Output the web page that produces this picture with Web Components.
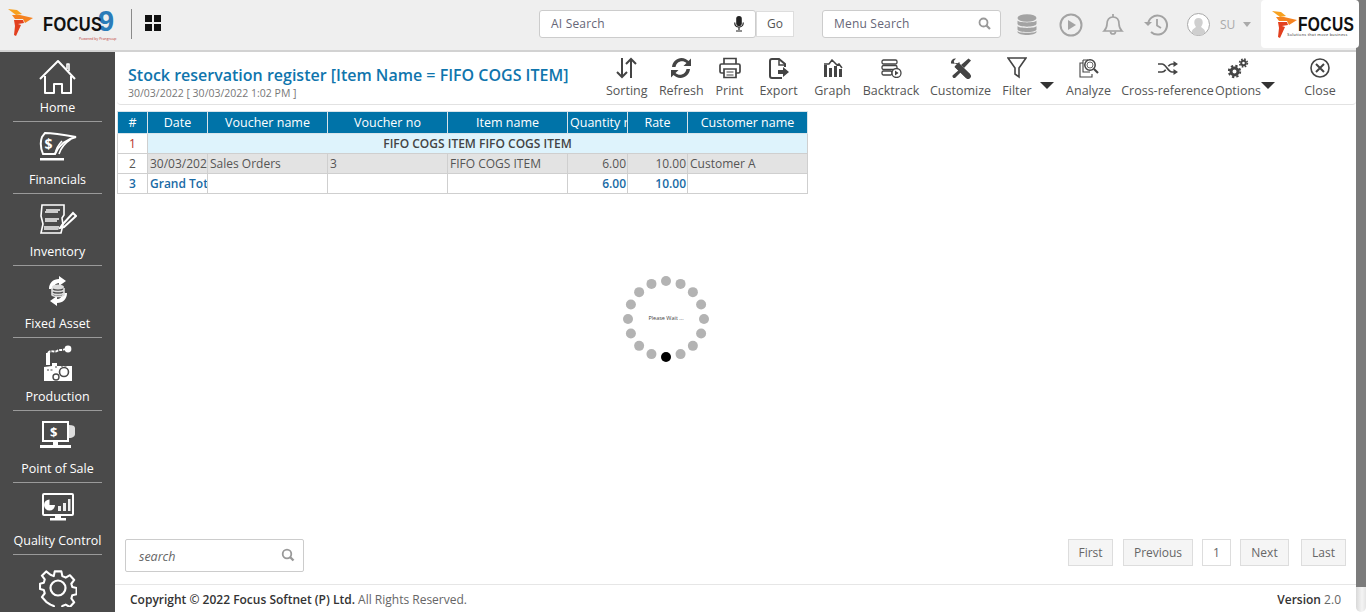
<!DOCTYPE html>
<html>
<head>
<meta charset="utf-8">
<title>Stock reservation register</title>
<style>
html, body { margin: 0; height: 100%; overflow: hidden; background: #fff; }
body { font: 13px "Open Sans", "Liberation Sans", sans-serif; color: #555; }
</style>
</head>
<body>
<f9-app>
  <f9-header slot="header"></f9-header>
  <f9-sidebar slot="sidebar">
    <f9-nav-item icon="home">Home</f9-nav-item>
    <f9-nav-item icon="financials">Financials</f9-nav-item>
    <f9-nav-item icon="inventory">Inventory</f9-nav-item>
    <f9-nav-item icon="asset">Fixed Asset</f9-nav-item>
    <f9-nav-item icon="production">Production</f9-nav-item>
    <f9-nav-item icon="pos">Point of Sale</f9-nav-item>
    <f9-nav-item icon="quality">Quality Control</f9-nav-item>
    <f9-nav-item icon="settings">Settings</f9-nav-item>
  </f9-sidebar>
  <f9-report slot="main">
    <f9-toolbar slot="toolbar">
      <f9-tool icon="sorting" style="--w:53.5px">Sorting</f9-tool>
      <f9-tool icon="refresh" style="--w:55.5px">Refresh</f9-tool>
      <f9-tool icon="print" style="--w:41px">Print</f9-tool>
      <f9-tool icon="export" style="--w:57px">Export</f9-tool>
      <f9-tool icon="graph" style="--w:51px">Graph</f9-tool>
      <f9-tool icon="backtrack" style="--w:66px">Backtrack</f9-tool>
      <f9-tool icon="customize" style="--w:73px">Customize</f9-tool>
      <f9-tool icon="filter" caret style="--w:63px">Filter</f9-tool>
      <f9-tool icon="analyze" style="--w:57px">Analyze</f9-tool>
      <f9-tool icon="cross" style="--w:101px">Cross-reference</f9-tool>
      <f9-tool icon="options" caret style="--w:76px">Options</f9-tool>
      <f9-tool icon="close" style="--w:52px">Close</f9-tool>
    </f9-toolbar>
    <f9-table slot="table"></f9-table>
    <f9-spinner slot="overlay"></f9-spinner>
    <f9-search slot="search"></f9-search>
    <f9-pager slot="pager"></f9-pager>
    <f9-footer slot="footer"></f9-footer>
  </f9-report>
  <f9-scrollbar slot="scroll"></f9-scrollbar>
</f9-app>

<script>
var W = 'fill="none" stroke="#fff" stroke-width="2" stroke-linejoin="round"';
var D = 'fill="none" stroke="#444" stroke-width="2"';

// sidebar icons, white on dark
var navIcons = {
  home: `<svg width="38" height="38" viewBox="0 0 38 38" ${W} stroke-linejoin="miter"><path d="M1 20 19 2l17 18"/><path d="M28 10V5h2v7" stroke-width="1.6"/><path d="M6 17v17h9v-9h8v9h9V17"/></svg>`,
  financials: `<svg width="38" height="30" viewBox="0 0 38 30"><path d="M3 5c-2 5-1 12 1 17h12c3-7 8-14 21-17C26 3 13 1 6 1z" fill="none" stroke="#fff" stroke-width="2"/><path d="M20 22c2-7 6-11 12-15M16 22c1-5 3-9 7-13" fill="none" stroke="#fff" stroke-width="1.6"/><text x="5.5" y="17" font-family="Open Sans" font-weight="700" font-size="14" fill="#fff">$</text><rect x="1" y="26" width="24" height="2.5" fill="#fff"/></svg>`,
  inventory: `<svg width="38" height="32" viewBox="0 0 38 32" fill="none" stroke="#fff" stroke-width="1.6"><path d="M3 2h22v10l-2 3 1 7-2 8H2l2-9-2-8z"/><path d="M7 7h14M6 9h13M6 16h14M6 18h12M5 24h15M5 26h14" stroke-width="2" stroke="#ccc"/><path d="M23 22 34 10l3 3-12 11-4 1z" stroke-width="2"/></svg>`,
  asset: `<svg width="26" height="30" viewBox="0 0 26 30" fill="none"><path d="M4 13C4 7 8 3 14 3V0l7 5-7 5V7c-3 0-5 2-6 6z" fill="#fff"/><path d="M22 17c0 6-4 10-10 10v3l-7-5 7-5v3c3 0 5-2 6-6z" fill="#fff"/><ellipse cx="13" cy="11" rx="6" ry="2.4" fill="#ddd"/><path d="M7 14c2 2 10 2 12 0M7 17c2 2 10 2 12 0M7 12v7c2 2 10 2 12 0v-7" stroke="#ddd" stroke-width="1.6"/></svg>`,
  production: `<svg width="30" height="37" viewBox="0 0 30 37"><path d="M5 20V8" stroke="#fff" stroke-width="4"/><path d="M5 8c3-4 6 0 9-2s5 0 8-2" stroke="#fff" stroke-width="2" fill="none" stroke-dasharray="3 1"/><circle cx="25" cy="4" r="3.4" fill="#fff"/><path d="M1 36V22l8-1V18h5v3h15v15z" fill="#fff"/><circle cx="21" cy="27" r="4.5" fill="none" stroke="#4a4a4a" stroke-width="1.6"/><circle cx="13" cy="32" r="3" fill="none" stroke="#4a4a4a" stroke-width="1.4"/><path d="M4 25h6M12 22h2M18 21h7" stroke="#4a4a4a" stroke-dasharray="2 1.5"/></svg>`,
  pos: `<svg width="37" height="28" viewBox="0 0 37 28"><rect x="4" y="1" width="25" height="19" fill="none" stroke="#fff" stroke-width="2"/><text x="11" y="16" font-family="Open Sans" font-weight="700" font-size="13" fill="#fff">$</text><path d="M30 4c4 0 6 1 6 3v6c0 2-2 4-6 4z" fill="#ddd"/><rect x="14" y="20" width="5" height="4" fill="#fff"/><rect x="1" y="24" width="31" height="3" fill="#fff"/></svg>`,
  quality: `<svg width="34" height="29" viewBox="0 0 34 29"><rect x="2" y="1" width="30" height="21" rx="1" fill="none" stroke="#fff" stroke-width="2"/><path d="M13 11A5.5 5.5 0 1 1 7.500 5.500V11z" fill="#fff" transform="translate(1 1)"/><path d="M17 18v-5h3v5zM22 18v-8h3v8zM27 18V6h2.500v12z" fill="#eee"/><rect x="14" y="22" width="6" height="3" fill="#fff"/><rect x="9" y="25" width="16" height="2.500" fill="#fff"/></svg>`,
  settings: `<svg width="38" height="38" viewBox="0 0 38 38" fill="none" stroke="#fff" stroke-width="2.200" stroke-linejoin="round"><path d="M15.500 2h7l1 5 3.500 1.500 4.500-2.500 4.500 5-3 4 1 3.500 4.500 1v6.500l-4.500 1-1 3.500 3 4-4.500 5-4.500-2.500-3.500 1.500-1 4h-7l-1-4-3.500-1.500L6.500 34 2 29l3-4-1-3.500-4-1V15l4-1 1-3.500-3-4L6.500 2 11 5.500 14.500 7z" transform="translate(1 .5) scale(.95)"/><circle cx="19" cy="19" r="7.500"/></svg>`
};

// toolbar icons
var toolIcons = {
  sorting: `<svg width="21" height="22" viewBox="0 0 21 22" ${D}><path d="M6 1v19M1 15l5 5 5-5"/><path d="M15 21V2M10 7l5-5 5 5"/></svg>`,
  refresh: `<svg width="22" height="22" viewBox="0 0 22 22" fill="#444"><path d="M2 10C2.500 4.500 7 1 11.500 1c3 0 5.500 1.500 7 3L21 1.500V9h-7.500L16.500 6c-4-3.500-10-1.500-11 4z"/><path d="M20 12c-.5 5.500-5 9-9.500 9-3 0-5.500-1.500-7-3L1 20.500V13h7.500L5.500 16c4 3.500 10 1.500 11-4z"/></svg>`,
  print: `<svg width="22" height="22" viewBox="0 0 22 22" fill="none" stroke="#444" stroke-width="1.700"><path d="M5 7V1.500h12V7"/><path d="M5 16H2.500A1.500 1.500 0 0 1 1 14.500v-6A1.500 1.500 0 0 1 2.500 7h17A1.500 1.500 0 0 1 21 8.500v6a1.500 1.500 0 0 1-1.500 1.500H17"/><path d="M5 12h12v8.500H5z"/><path d="M7.500 15h7M7.500 18h7" stroke-width="1"/></svg>`,
  export: `<svg width="20" height="21" viewBox="0 0 20 21"><path d="M13 20H3a2 2 0 0 1-2-2V3a2 2 0 0 1 2-2h7l6 5v3" fill="none" stroke="#444" stroke-width="2"/><path d="M10 1v6h6" fill="none" stroke="#444" stroke-width="1.500"/><path d="M9 12h5V9l6 5-6 5v-3H9z" fill="#444"/></svg>`,
  graph: `<svg width="20" height="18" viewBox="0 0 20 18" fill="#444"><path d="M1 6h3v12H1zM6 9h3v9H6zM11 7h3v11h-3zM16 10h3v8h-3z"/><path d="M1 5l5 0 3-4 5 5 2-1 3 4" fill="none" stroke="#444" stroke-width="1.500"/></svg>`,
  backtrack: `<svg width="21" height="19" viewBox="0 0 21 19" fill="none" stroke="#444" stroke-width="1.300"><rect x="1" y="1" width="15" height="4" rx="1.500"/><rect x="1" y="6.500" width="15" height="4" rx="1.500"/><rect x="1" y="12" width="10" height="4" rx="1.500"/><circle cx="15.500" cy="14" r="4.500" fill="#fff"/><path d="M14 11.500 17.500 14 14 16.500z" fill="#444" stroke="none"/></svg>`,
  customize: `<svg width="22" height="21" viewBox="0 0 22 21" fill="#444"><path d="M2 1 0.500 2.500 7 10l-5.500 6a2.800 2.800 0 0 0 3.500 3.500L10.500 14l5 5.500a2.500 2.500 0 0 0 4-4L14 10 6 3z" opacity="0"/><path d="M1 5.500C.5 2.500 3 0 6 .5L3.800 3l.7 2.500 2.500.7L9.500 4c.5 3-2 5.500-5 5 0 0 0 0 0 0l11.500 11a2.500 2.500 0 0 0 4.200-3.700L8 5"/><path d="M4.500 8.500 16 20l4-4L8.500 4.500z"/><path d="M21 2.500 18.500.5 11 7l3 3z"/><path d="M10 11 2.500 17.500a2 2 0 0 0 2.500 2.500L12 13z"/></svg>`,
  filter: `<svg width="20" height="22" viewBox="0 0 20 22" fill="none" stroke="#444" stroke-width="1.600"><path d="M1 1h18l-7 10v9l-4-3v-6z"/></svg>`,
  analyze: `<svg width="20" height="20" viewBox="0 0 20 20" fill="none" stroke="#444" stroke-width="1.100"><path d="M4 5H1v14h12v-3"/><path d="M4 2h5M4 2v12h7"/><circle cx="11" cy="7" r="5.200" stroke-width="1.500"/><circle cx="11" cy="7" r="3" stroke-width=".8"/><path d="M15 11l4 4" stroke-width="2.200"/></svg>`,
  cross: `<svg width="20" height="14" viewBox="0 0 20 14" fill="none" stroke="#444" stroke-width="1.700"><path d="M0 3h4c4 0 6 8 10 8h2M0 11h4c1.500 0 2.700-1 3.700-2.300M10.300 5.300C11.300 4 12.500 3 14 3h2"/><path d="M15.500 0 20 3l-4.500 3zM15.500 8 20 11l-4.500 3z" fill="#444" stroke="none"/></svg>`,
  options: `<svg width="21" height="21" viewBox="0 0 21 21"><g fill="none" stroke="#444"><circle cx="6.500" cy="13.500" r="3.500" stroke-width="3"/><circle cx="6.500" cy="13.500" r="5.700" stroke-width="2" stroke-dasharray="2.300 2.200"/><circle cx="15.500" cy="5" r="2.300" stroke-width="2"/><circle cx="15.500" cy="5" r="3.900" stroke-width="1.600" stroke-dasharray="1.600 1.500"/></g></svg>`,
  close: `<svg width="20" height="20" viewBox="0 0 20 20" fill="none" stroke="#444" stroke-width="1.600"><circle cx="10" cy="10" r="9"/><path d="M6 6l8 8M14 6l-8 8" stroke-width="2"/></svg>`
};

var flame = `<svg width="25" height="28" viewBox="0 0 25 28"><path d="M0 0l9 1 5 4-6 1z" fill="#f7a11f"/><path d="M4 6l8 0 13 3-8 5-2-4-8 0z" fill="#f58220"/><path d="M6 11l9 0 1 3-6 1 3 1-5 11-2-1 1-9z" fill="#e2401f"/></svg>`;

class F9App extends HTMLElement {
  constructor() {
    super();
    this.attachShadow({ mode: 'open' }).innerHTML = `<style>
      :host { display: grid; width: 1366px; height: 612px; overflow: hidden;
        grid-template-columns: 115px 1fr 10px; grid-template-rows: 52px 1fr; }
      ::slotted([slot=header]) { grid-column: 1 / 3; }
      ::slotted([slot=scroll]) { grid-column: 3; grid-row: 1 / 3; }
    </style><slot name="header"></slot><slot name="scroll"></slot><slot name="sidebar"></slot><slot name="main"></slot>`;
  }
}

class F9Header extends HTMLElement {
  constructor() {
    super();
    this.attachShadow({ mode: 'open' }).innerHTML = `<style>
      :host { display: flex; align-items: center; background: #efefef; border-bottom: 2px solid #d2d2d2; box-sizing: border-box; height: 52px; position: relative; }
      .brand { display: flex; align-items: center; width: 131px; height: 100%; box-sizing: border-box; padding: 0 0 4px 8px; border-right: 0; flex: none; }
      .word { font: 700 21px/1 "Liberation Sans", sans-serif; color: #111; display: inline-block; transform: scaleX(.78); transform-origin: left center; margin-left: 10px; width: 54px; letter-spacing: .5px; }
      .nine { font: 700 29px/1 "Liberation Sans", sans-serif; color: #2b7cb9; margin-left: 1px; margin-top: -4px; }
      .pow { position: absolute; left: 79px; top: 37px; font: 3.500px/1 "Open Sans", sans-serif; color: #b33; white-space: nowrap; }
      .sep { width: 1px; height: 30px; background: #8a8a8a; flex: none; margin-bottom: 2px; }
      .tiles { display: grid; grid-template: 7px 7px / 7px 7px; gap: 2px; margin: 0 0 4px 13px; flex: none; }
      .tiles i { background: #111; }
      .box { display: flex; align-items: center; height: 28px; box-sizing: border-box; background: #fff; border: 1px solid #ccc; border-radius: 3px; font-size: 12px; color: #667; padding: 0 11px; flex: none; margin-bottom: 3px; }
      .box span { flex: 1; letter-spacing: .2px; }
      .ai { width: 217px; margin-left: 378px; }
      .go { width: 38px; height: 26px; background: #fff; border: 1px solid #ddd; display: flex; align-items: center; justify-content: center; font-size: 12px; color: #555; box-sizing: border-box; margin-bottom: 3px; flex: none; }
      .menu { width: 179px; margin-left: 28px; padding-right: 9px; }
      .icons { display: flex; align-items: center; flex: none; margin-bottom: 1px; }
      .icons svg { display: block; flex: none; }
      .su { font-size: 12px; color: #aaa; margin-left: 10px; }
      .caret { width: 0; height: 0; border: 4px solid transparent; border-top: 5px solid #aaa; border-bottom: 0; margin-left: 8px; }
      .logo { flex: none; width: 98px; height: 48px; background: #fff; border-radius: 4px; margin-left: 10px; margin-bottom: 2px; position: relative; display: flex; align-items: flex-start; padding: 11px 0 0 11px; box-sizing: border-box; }
      .logo .word { font-size: 21px; width: 46px; margin: 2px 0 0 1px; transform: scaleX(.74); }
      .tag { position: absolute; left: 26px; top: 33px; font: 3.800px/1 "Open Sans", sans-serif; color: #222; white-space: nowrap; letter-spacing: .3px; }
    </style>
    <div class="brand">${flame}<span class="word">FOCUS</span><span class="nine">9</span><span class="pow">Powered by Prangroup</span></div>
    <div class="sep"></div>
    <div class="tiles"><i></i><i></i><i></i><i></i></div>
    <div class="box ai"><span>AI Search</span>
      <svg width="10" height="16" viewBox="0 0 10 16"><rect x="2.200" y="0" width="5.600" height="10" rx="2.800" fill="#222"/><path d="M.7 6.500c0 6 8.600 6 8.600 0M5 11v3M2 15h6" fill="none" stroke="#222" stroke-width="1.200"/></svg>
    </div>
    <div class="go">Go</div>
    <div class="box menu"><span>Menu Search</span>
      <svg width="13" height="13" viewBox="0 0 13 13" fill="none" stroke="#999" stroke-width="1.800"><circle cx="5.500" cy="5.500" r="4"/><path d="M8.500 8.500l3.500 3.500" stroke-width="2.200"/></svg>
    </div>
    <div class="icons">
      <svg style="margin-left:16px" width="20" height="22" viewBox="0 0 20 22"><ellipse cx="10" cy="4" rx="9.500" ry="3.800" fill="#a3a3a3"/><path d="M.5 6.500c1 2.500 18 2.500 19 0V10c-1 3.500-18 3.500-19 0zM.5 12c1 2.500 18 2.500 19 0v3.500c-1 3.500-18 3.500-19 0zM.5 17c1 2.500 18 2.500 19 0v1c-1 4-18 4-19 0z" fill="#a3a3a3"/></svg>
      <svg style="margin-left:22px" width="24" height="24" viewBox="0 0 24 24"><circle cx="12" cy="12" r="10.500" fill="none" stroke="#a3a3a3" stroke-width="2"/><path d="M9 7l8 5-8 5z" fill="#a3a3a3"/></svg>
      <svg style="margin-left:19px" width="22" height="23" viewBox="0 0 22 23" fill="none" stroke="#a3a3a3" stroke-width="1.700"><path d="M2 18c2-2 3-3 3-7 0-4 2-7 6-7s6 3 6 7c0 4 1 5 3 7z"/><path d="M11 1v3M8.500 18.500a2.500 2.500 0 0 0 5 0"/></svg>
      <svg style="margin-left:20px" width="24" height="22" viewBox="0 0 24 22" fill="none" stroke="#a3a3a3" stroke-width="2"><path d="M4 11a9.500 9.500 0 1 1 3 7"/><path d="M0 8l4 4 4-4" fill="#a3a3a3" stroke="none"/><path d="M13 5v6.500l4 2.500" stroke-width="1.800"/></svg>
      <svg style="margin-left:19px" width="23" height="23" viewBox="0 0 23 23"><circle cx="11.500" cy="11.500" r="11" fill="#fff" stroke="#a8a8a8"/><path d="M4.500 19.500c1-4 3.500-4.500 4.500-5.500-3-4-2-9 2.500-9s5.500 5 2.500 9c1 1 3.500 1.500 4.500 5.500a10 10 0 0 1-14 0z" fill="#cfcfcf"/></svg>
      <span class="su">SU</span><i class="caret"></i>
    </div>
    <div class="logo">${flame}<span class="word">FOCUS</span><span class="tag">Solutions that move business</span></div>`;
  }
}

class F9Sidebar extends HTMLElement {
  constructor() {
    super();
    this.attachShadow({ mode: 'open' }).innerHTML = `<style>
      :host { display: block; background: #4a4a4a; overflow: hidden; min-height: 0; }
    </style><slot></slot>`;
  }
}

class F9NavItem extends HTMLElement {
  constructor() { super(); this.attachShadow({ mode: 'open' }); }
  connectedCallback() {
    this.shadowRoot.innerHTML = `<style>
      :host { display: flex; flex-direction: column; align-items: center; height: 72.170px; margin: 0 13px; box-sizing: border-box; color: #fff; font-size: 12.500px; position: relative; }
      :host(:first-child) { height: 70px; }
      :host(:not(:last-child)) { border-bottom: 1px solid #9a9a9a; }
      :host(:last-child) { height: 80px; }
      .ic { flex: 1; min-height: 0; display: flex; align-items: center; justify-content: center; }
      :host(:first-child) .ic { padding-top: 4px; }
      :host(:last-child) .ic { padding-top: 8px; }
      .lb { line-height: 18px; height: 18px; margin-bottom: 4px; white-space: nowrap; }
      svg { display: block; }
    </style><div class="ic">${navIcons[this.getAttribute('icon')]}</div><div class="lb"><slot></slot></div>`;
  }
}

class F9Report extends HTMLElement {
  constructor() {
    super();
    this.attachShadow({ mode: 'open' }).innerHTML = `<style>
      :host { display: flex; flex-direction: column; min-width: 0; min-height: 0; position: relative; background: #fff; }
      .body { flex: 1; min-height: 0; padding: 6px 0 0 2px; }
      .bottom { display: flex; justify-content: space-between; align-items: flex-start; padding: 0 10px 12px 10px; }
    </style><slot name="toolbar"></slot><div class="body"><slot name="table"></slot></div><slot name="overlay"></slot>
    <div class="bottom"><slot name="search"></slot><slot name="pager"></slot></div><slot name="footer"></slot>`;
  }
}

class F9Toolbar extends HTMLElement {
  constructor() {
    super();
    this.attachShadow({ mode: 'open' }).innerHTML = `<style>
      :host { display: flex; align-items: flex-start; height: 53px; box-sizing: border-box; margin-left: 2px; padding-right: 10px; border-bottom: 1px solid #e2e2e2; border-radius: 0 0 4px 4px; }
      .title { flex: 1; min-width: 0; padding: 12px 0 0 11px; }
      h1 { margin: 0; font: 600 16px/22px "Open Sans", sans-serif; color: #0f75ad; white-space: nowrap; }
      .date { font-size: 10.500px; line-height: 15px; color: #777; white-space: nowrap; margin-top: 0; }
      .tools { display: flex; flex: none; }
    </style>
    <div class="title"><h1>Stock reservation register [Item Name = FIFO COGS ITEM]</h1><div class="date">30/03/2022 [ 30/03/2022 1:02 PM ]</div></div>
    <div class="tools"><slot></slot></div>`;
  }
}

class F9Tool extends HTMLElement {
  constructor() { super(); this.attachShadow({ mode: 'open' }); }
  connectedCallback() {
    var caret = this.hasAttribute('caret');
    this.shadowRoot.innerHTML = `<style>
      :host { display: flex; width: var(--w); flex: none; color: #555; font-size: 12.500px; }
      .in { display: flex; flex-direction: column; align-items: center; width: ${caret ? '40px' : '100%'}; flex: none; }
      .ic { height: 24px; margin-top: 4px; display: flex; align-items: center; justify-content: center; }
      .lb { line-height: 17px; margin-top: 2px; white-space: nowrap; }
      .caret { width: 0; height: 0; border: 7px solid transparent; border-top: 7px solid #333; border-bottom: 0; margin: 30px 0 0 3px; }
      svg { display: block; }
    </style><div class="in"><div class="ic">${toolIcons[this.getAttribute('icon')]}</div><div class="lb"><slot></slot></div></div>${caret ? '<i class="caret"></i>' : ''}`;
  }
}

class F9Table extends HTMLElement {
  constructor() {
    super();
    var cols = [30, 60, 120, 120, 120, 60, 60, 120];
    var heads = ['#', 'Date', 'Voucher name', 'Voucher no', 'Item name', 'Quantity reserved', 'Rate', 'Customer name'];
    this.attachShadow({ mode: 'open' }).innerHTML = `<style>
      :host { display: block; width: 691px; }
      table { border-collapse: collapse; table-layout: fixed; width: 691px; font-size: 12px; color: #555; }
      th { background: #0073a8; color: #fff; font-weight: 400; height: 21px; padding: 0 2px; border: 1px solid #d8e4ea; white-space: nowrap; overflow: hidden; text-overflow: clip; font-size: 12.500px; }
      td { height: 19px; padding: 0 2px; border: 1px solid #cfcfcf; white-space: nowrap; overflow: hidden; }
      .n { text-align: center; }
      .r { text-align: right; padding-right: 1px; }
      .group td.g { background: #def3fc; text-align: center; font-weight: 600; color: #444; }
      .red { color: #b5322a; }
      .grey td:not(.n) { background: #e3e3e3; }
      .total td { color: #1a6aa5; font-weight: 600; }
      .total td.n { font-weight: 600; }
    </style>
    <table>
      <colgroup>${cols.map(c => `<col style="width:${c}px">`).join('')}</colgroup>
      <tr>${heads.map(h => `<th>${h}</th>`).join('')}</tr>
      <tr class="group"><td class="n red">1</td><td class="g" colspan="7">FIFO COGS ITEM FIFO COGS ITEM</td></tr>
      <tr class="grey"><td class="n">2</td><td>30/03/2022</td><td>Sales Orders</td><td>3</td><td>FIFO COGS ITEM</td><td class="r">6.00</td><td class="r">10.00</td><td>Customer A</td></tr>
      <tr class="total"><td class="n">3</td><td>Grand Total</td><td></td><td></td><td></td><td class="r">6.00</td><td class="r">10.00</td><td></td></tr>
    </table>`;
  }
}

class F9Spinner extends HTMLElement {
  constructor() {
    super();
    var dots = '';
    for (var i = 0; i < 16; i++) {
      var a = i * Math.PI / 8;
      var x = 50 + 38 * Math.sin(a), y = 50 - 38 * Math.cos(a);
      dots += `<circle cx="${x.toFixed(2)}" cy="${y.toFixed(2)}" r="5" fill="${i == 8 ? '#000' : '#b3b3b3'}"/>`;
    }
    this.attachShadow({ mode: 'open' }).innerHTML = `<style>
      :host { position: absolute; left: 501px; top: 217px; width: 100px; height: 100px; }
      svg { display: block; }
      div { position: absolute; inset: 0; display: flex; align-items: center; justify-content: center; font: 5.500px/1 "Open Sans", sans-serif; color: #444; white-space: nowrap; }
    </style><svg width="100" height="100" viewBox="0 0 100 100">${dots}</svg><div>Please Wait ...</div>`;
  }
}

class F9Search extends HTMLElement {
  constructor() {
    super();
    this.attachShadow({ mode: 'open' }).innerHTML = `<style>
      :host { display: flex; align-items: center; width: 179px; height: 33px; box-sizing: border-box; border: 1px solid #ccc; border-radius: 2px; background: #fff; padding: 2px 8px 0 13px; font-size: 12.500px; font-style: italic; color: #666; }
      span { flex: 1; }
      svg { margin-top: -3px; }
    </style><span>search</span>
    <svg width="14" height="14" viewBox="0 0 14 14" fill="none" stroke="#999" stroke-width="1.800"><circle cx="6" cy="6" r="4.300"/><path d="M9 9l3.500 3.500" stroke-width="2.400"/></svg>`;
  }
}

class F9Pager extends HTMLElement {
  constructor() {
    super();
    var btn = (t, w, ml, cur) => `<span class="${cur ? 'cur' : ''}" style="width:${w}px;margin-left:${ml}px">${t}</span>`;
    this.attachShadow({ mode: 'open' }).innerHTML = `<style>
      :host { display: flex; }
      span { display: flex; align-items: center; justify-content: center; height: 27px; box-sizing: border-box; background: #f5f5f5; border: 1px solid #ddd; font-size: 12px; color: #666; }
      .cur { background: #fff; }
    </style>${btn('First', 45, 0)}${btn('Previous', 70, 10)}${btn('1', 29, 9, true)}${btn('Next', 49, 9)}${btn('Last', 45, 12)}`;
  }
}

class F9Footer extends HTMLElement {
  constructor() {
    super();
    this.attachShadow({ mode: 'open' }).innerHTML = `<style>
      :host { display: flex; justify-content: space-between; align-items: center; height: 28px; box-sizing: border-box; border-top: 1px solid #e6e6e6; padding: 1px 15px 0 15px; font-size: 12px; color: #666; }
      b { font-weight: 600; color: #333; }
    </style><div><b>Copyright © 2022 Focus Softnet (P) Ltd.</b> All Rights Reserved.</div><div><b>Version</b> 2.0</div>`;
  }
}

class F9Scrollbar extends HTMLElement {
  constructor() {
    super();
    this.attachShadow({ mode: 'open' }).innerHTML = `<style>
      :host { display: flex; flex-direction: column; background: #fff; min-height: 0; }
      .thumb { height: 587px; background: #7b7b7b; flex: none; }
      .track { flex: 1; background: linear-gradient(90deg, #d8d8d8, #f4f4f4 60%, #e4e4e4); border-radius: 0 0 5px 5px; }
    </style><div class="thumb"></div><div class="track"></div>`;
  }
}

customElements.define('f9-app', F9App);
customElements.define('f9-header', F9Header);
customElements.define('f9-sidebar', F9Sidebar);
customElements.define('f9-nav-item', F9NavItem);
customElements.define('f9-report', F9Report);
customElements.define('f9-toolbar', F9Toolbar);
customElements.define('f9-tool', F9Tool);
customElements.define('f9-table', F9Table);
customElements.define('f9-spinner', F9Spinner);
customElements.define('f9-search', F9Search);
customElements.define('f9-pager', F9Pager);
customElements.define('f9-footer', F9Footer);
customElements.define('f9-scrollbar', F9Scrollbar);
</script>
</body>
</html>
